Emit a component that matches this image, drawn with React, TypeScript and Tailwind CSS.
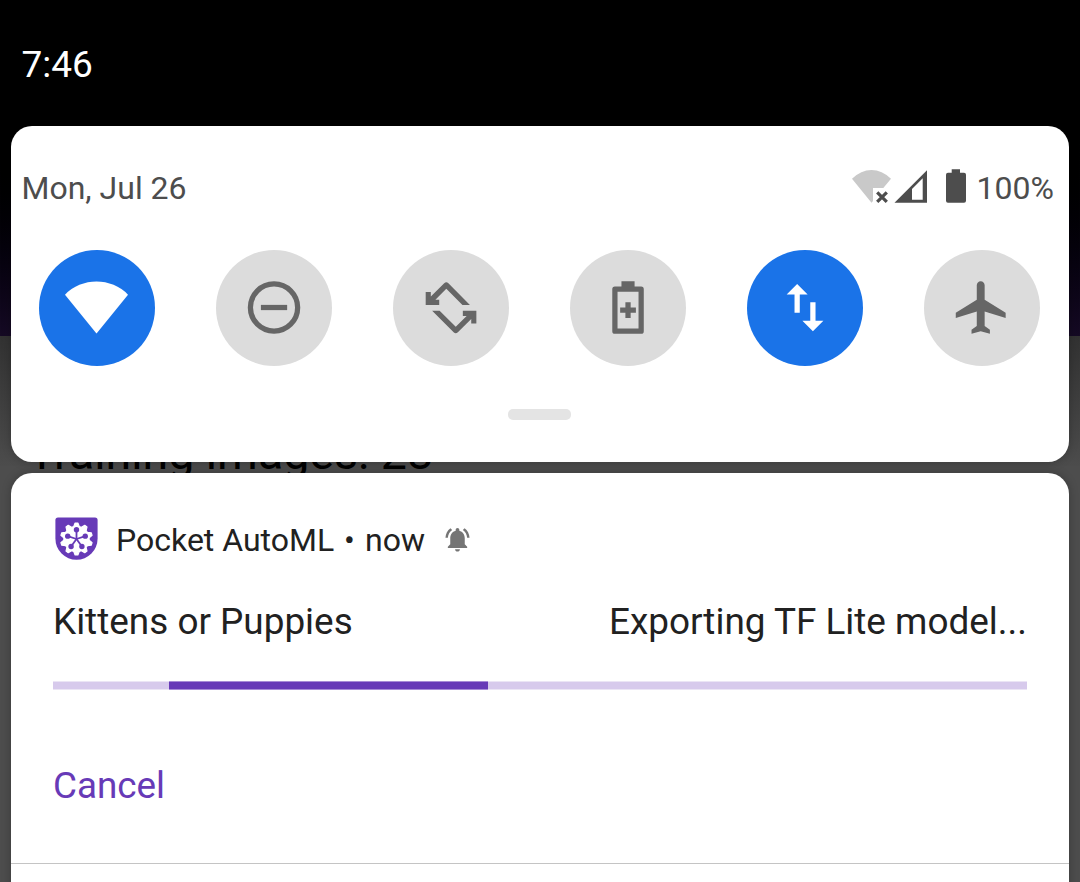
import type { ReactNode } from "react";

function Tile({ on, shift = 0.2, children }: { on?: boolean; shift?: number; children: ReactNode }) {
  return (
    <button
      className={
        on
          ? "flex size-[116px] justify-center rounded-full bg-[#1a73e8] pt-[25.5px] pr-px text-white"
          : "flex size-[116px] justify-center rounded-full bg-[#dcdcdc] pt-[25.5px] pr-px text-[#666666]"
      }
    >
      <svg viewBox="0 0 24 24" className="size-[63px] overflow-visible" fill="currentColor">
        <g transform={`translate(${shift} 0)`}>{children}</g>
      </svg>
    </button>
  );
}

const ROTATE_HALF =
  "M19.2 11H16.35L10.2 4.85L6.05 9H7.5V11H2.35V6.1H4.3V7.85L9.4 2.75Q10.2 2.1 11 2.75Z";

function gearPoints(cx: number, cy: number) {
  const pts: string[] = [];
  const steps: [number, number][] = [
    [-13, 12.7],
    [-5, 16],
    [5, 16],
    [13, 12.7],
  ];
  for (let i = 0; i < 10; i++) {
    for (const [d, r] of steps) {
      const a = ((i * 36 + d) * Math.PI) / 180;
      pts.push(`${(cx + r * Math.sin(a)).toFixed(2)},${(cy - r * Math.cos(a)).toFixed(2)}`);
    }
  }
  return pts.join(" ");
}

function AppIcon() {
  const nodes = [0, 72, 144, 216, 288].map((deg) => {
    const a = (deg * Math.PI) / 180;
    return [21.5 + 9.2 * Math.sin(a), 22 - 9.2 * Math.cos(a)];
  });
  return (
    <svg viewBox="0 0 43 43" className="size-[43px]">
      <path d="M3 .4H40Q42.6 .4 42.6 3V21.5A21.1 21.3 0 0 1 .4 21.5V3Q.4 .4 3 .4Z" fill="#673ab7" />
      <polygon points={gearPoints(21.5, 22)} fill="#fff" stroke="#fff" strokeWidth="1.2" strokeLinejoin="round" />
      {nodes.map(([x, y], i) => (
        <g key={i}>
          <line x1="21.5" y1="22" x2={x} y2={y} stroke="#673ab7" strokeWidth="1.8" />
          <circle cx={x} cy={y} r="2.7" fill="#673ab7" />
        </g>
      ))}
    </svg>
  );
}

function StatusIcons() {
  return (
    <svg viewBox="852 168 116 36" className="h-9 w-[116px]">
      <path d="M852 178.8Q861 170 871.5 170T891 178.8L883.3 188H873V201L871.5 202.7Z" fill="#c9c9c9" />
      <path d="M877.2 192.3L886.8 201.9M886.8 192.3L877.2 201.9" stroke="#4d4d4d" strokeWidth="3.2" />
      <path d="M894.5 202.8L927 170.3V202.8ZM912 189V199.8H922.7V178.3Z" fill="#4d4d4d" fillRule="evenodd" />
      <path
        d="M951.7 169.2H960V172.7H964Q966 172.7 966 174.7V200.8Q966 202.8 964 202.8H948Q946 202.8 946 200.8V174.7Q946 172.7 948 172.7H951.7Z"
        fill="#4d4d4d"
      />
    </svg>
  );
}

export default function App() {
  return (
    <div className="relative flex h-[882px] w-[1080px] flex-col overflow-hidden bg-[#4d4d4d] px-[11px] font-[Roboto,sans-serif]">
      <div className="absolute inset-x-0 top-0 h-[336px] bg-linear-to-b from-black from-35% to-[#150a24]" />
      <div className="absolute inset-x-0 top-[336px] h-[130px] bg-linear-to-b from-[#323232] to-[#4c4c4c]" />
      <div className="absolute top-[427px] left-[28px] text-[46.5px] leading-[52px] whitespace-nowrap text-black">
        Training images: 28
      </div>

      <div className="relative flex h-[126px] shrink-0 items-start pt-[45px] pl-[10.5px]">
        <span className="text-[37px] leading-[40px] text-white">7:46</span>
      </div>

      <section className="relative flex h-[336px] shrink-0 flex-col rounded-[21px] bg-white shadow-[0_0_10px_rgba(0,0,0,0.25)]">
        <div className="flex h-[124px] items-start justify-between pt-[42px] pr-[15px] pl-[10.5px] text-[32px] leading-[40px] text-[#4d4d4d]">
          <span>Mon, Jul 26</span>
          <div className="flex gap-[9px]">
            <StatusIcons />
            <span>100%</span>
          </div>
        </div>
        <div className="flex justify-between pr-[29px] pl-[28px]">
          <Tile on shift={0}>
            <path d="M0 7.1A16.8 16.8 0 0 1 24 7.1L12 21.9Z" />
          </Tile>
          <Tile>
            <circle cx="12" cy="12" r="9" fill="none" stroke="currentColor" strokeWidth="2" />
            <path d="M7 11H17V13H7Z" />
          </Tile>
          <Tile>
            <path d={ROTATE_HALF} />
            <path d={ROTATE_HALF} transform="rotate(180 12 12.1)" />
          </Tile>
          <Tile>
            <path
              fillRule="evenodd"
              d="M9.5 2H14.5V4H17Q18 4 18 5V21Q18 22 17 22H7Q6 22 6 21V5Q6 4 7 4H9.5ZM8 6V20H16V6ZM11 10H13V12H15V14H13V16H11V14H9V12H11Z"
            />
          </Tile>
          <Tile on>
            <path d="M9 3L5 7h3v7h2V7h3L9 3zm7 14v-7h-2v7h-3l4 4 4-4h-3z" />
          </Tile>
          <Tile>
            <path d="M21 16v-2l-8-5V3.5c0-.83-.67-1.5-1.5-1.5S10 2.67 10 3.5V9l-8 5v2l8-2.5V19l-2 1.5V22l3.5-1 3.5 1v-1.5L13 19v-5.5l8 2.5z" />
          </Tile>
        </div>
        <div className="mt-[43px] ml-[497px] h-[11px] w-[63px] rounded-[5px] bg-[#e4e4e4]" />
      </section>

      <section className="relative mt-[11px] flex h-[430px] shrink-0 flex-col rounded-t-[21px] bg-white px-[42px] shadow-[0_0_10px_rgba(0,0,0,0.25)]">
        <div className="flex pt-[44px] pl-[2px]">
          <AppIcon />
          <div className="mt-[3px] ml-[18px] flex text-[32px] leading-[40px] whitespace-nowrap text-[#212121]">
            <span className="w-[228px]">Pocket AutoML</span>
            <span className="w-[21px]">•</span>
            <span className="w-[60px]">now</span>
          </div>
          <svg viewBox="0 0 24 24" className="mt-[8px] ml-[18px] size-[29px]" fill="#757575">
            <path d="M7.58 4.08L6.15 2.65C3.75 4.48 2.17 7.3 2.03 10.5h2c.15-2.65 1.51-4.97 3.55-6.42zm12.39 6.42h2c-.15-3.2-1.73-6.02-4.12-7.85l-1.42 1.43c2.02 1.45 3.39 3.77 3.54 6.42zM18 11c0-3.07-1.64-5.64-4.5-6.32V4c0-.83-.67-1.5-1.5-1.5s-1.5.67-1.5 1.5v.68C7.63 5.36 6 7.92 6 11v5l-2 2v1h16v-1l-2-2v-5zM12 22c1.1 0 2-.9 2-2h-4c0 1.1.89 2 2 2z" />
          </svg>
        </div>
        <div className="mt-[42px] flex justify-between text-[36.9px] leading-[40px] text-[#212121]">
          <span>Kittens or Puppies</span>
          <span>Exporting TF Lite model...</span>
        </div>
        <div className="mt-[39px] flex h-[9px]">
          <div className="w-[116px] border-y border-[#ebe5f5] bg-[#d7caec]" />
          <div className="w-[319px] border-y border-[#a78cd6] bg-[#673ab7]" />
          <div className="grow border-y border-[#ebe5f5] bg-[#d7caec]" />
        </div>
        <div className="mt-[76px] text-[36.8px] leading-[40px] text-[#673ab7]">Cancel</div>
        <div className="-mx-[42px] mt-[57px] h-px bg-[#c4c4c4]" />
      </section>
    </div>
  );
}
